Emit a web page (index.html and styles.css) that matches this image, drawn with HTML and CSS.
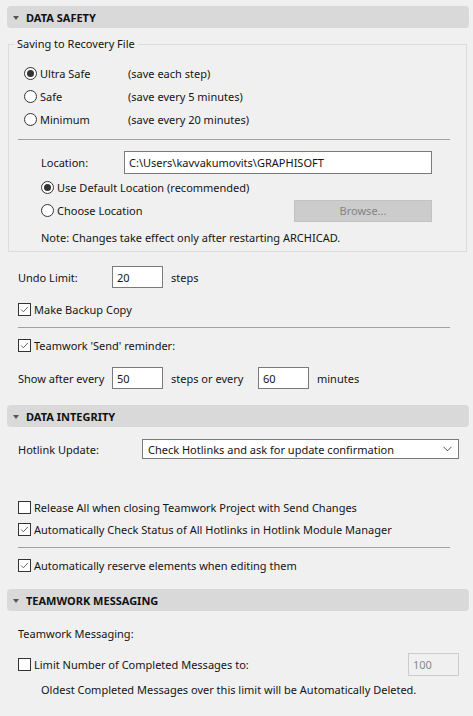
FILE: index.html
```html
<!DOCTYPE html>
<html>
<head>
<meta charset="utf-8">
<link rel="stylesheet" href="styles.css">
</head>
<body>
<div class="page">
  <div class="sec-head"><span class="tri"></span>DATA SAFETY</div>

  <fieldset class="group">
    <legend>Saving to Recovery File</legend>
    <div class="radio-grid">
      <div class="row r23"><span class="radio on"></span>Ultra Safe</div><div class="row r23">(save each step)</div>
      <div class="row r23"><span class="radio"></span>Safe</div><div class="row r23">(save every 5 minutes)</div>
      <div class="row r23"><span class="radio"></span>Minimum</div><div class="row r23">(save every 20 minutes)</div>
    </div>
    <div class="sep in-group"></div>
    <div class="loc">
      <div class="row r23"><span class="loc-label">Location:</span><div class="field wide">C:\Users\kavvakumovits\GRAPHISOFT</div></div>
      <div class="row r23 mt2"><span class="radio on"></span>Use Default Location (recommended)</div>
      <div class="row r23"><span class="radio"></span>Choose Location<button class="browse">Browse...</button></div>
      <div class="row r23 mt4">Note: Changes take effect only after restarting ARCHICAD.</div>
    </div>
  </fieldset>

  <div class="content">
    <div class="row r22 undo"><span class="lab94">Undo Limit:</span><div class="field num">20</div><span class="after">steps</span></div>
    <div class="row r22 mt10"><span class="check on"><svg viewBox="0 0 13 13"><path d="M2.5 6.5 L5.2 9.2 L10.5 3.5" /></svg></span>Make Backup Copy</div>
    <div class="sep mt7"></div>
    <div class="row r22 mt6"><span class="check on"><svg viewBox="0 0 13 13"><path d="M2.5 6.5 L5.2 9.2 L10.5 3.5" /></svg></span>Teamwork 'Send' reminder:</div>
    <div class="row r22 mt11"><span class="lab94">Show after every</span><div class="field num">50</div><span class="after w87">steps or every</span><div class="field num">60</div><span class="after">minutes</span></div>
  </div>

  <div class="sec-head mt16"><span class="tri"></span>DATA INTEGRITY</div>

  <div class="content">
    <div class="row r20 mt12"><span class="lab124">Hotlink Update:</span>
      <div class="select">Check Hotlinks and ask for update confirmation<svg class="chev" viewBox="0 0 9 6"><path d="M0.5 0.8 L4.5 4.8 L8.5 0.8" /></svg></div>
    </div>
    <div class="row r22 mt37"><span class="check"></span>Release All when closing Teamwork Project with Send Changes</div>
    <div class="row r22"><span class="check on"><svg viewBox="0 0 13 13"><path d="M2.5 6.5 L5.2 9.2 L10.5 3.5" /></svg></span>Automatically Check Status of All Hotlinks in Hotlink Module Manager</div>
    <div class="sep mt7"></div>
    <div class="row r22 mt6"><span class="check on"><svg viewBox="0 0 13 13"><path d="M2.5 6.5 L5.2 9.2 L10.5 3.5" /></svg></span>Automatically reserve elements when editing them</div>
  </div>

  <div class="sec-head mt13"><span class="tri"></span>TEAMWORK MESSAGING</div>

  <div class="content">
    <div class="row r22 mt11">Teamwork Messaging:</div>
    <div class="row r23 mt9"><span class="check"></span>Limit Number of Completed Messages to:<div class="field num disabled push">100</div></div>
    <div class="row r22 mt2 indent">Oldest Completed Messages over this limit will be Automatically Deleted.</div>
  </div>
</div>
</body>
</html>
```

FILE: styles.css
```css
* { box-sizing: border-box; }
html, body { margin: 0; padding: 0; }
body {
  background: #f0f0f0;
  width: 473px;
  height: 716px;
  overflow: hidden;
  font-family: "Noto Sans", "Open Sans", sans-serif;
  font-size: 11px;
  color: #141414;
}
.page { padding-top: 6px; }

.sec-head {
  height: 22px;
  margin: 0 4px 0 7px;
  background: #d9d9d9;
  border-radius: 4px;
  display: flex;
  align-items: center;
  font-weight: bold;
  font-size: 11px;
  color: #111;
}
.tri {
  width: 0; height: 0;
  border-left: 3.5px solid transparent;
  border-right: 3.5px solid transparent;
  border-top: 4px solid #555;
  margin: 1px 7px 0 6px;
}

.group {
  margin: 8px 6px 0 8px;
  padding: 10px 0 2px 0;
  border: 1px solid #dcdcdc;
  min-width: 0;
}
.group legend {
  margin-left: 5px;
  padding: 0 3px;
  line-height: 16px;
}

.row { display: flex; align-items: center; white-space: nowrap; }
.r23 { height: 23px; }
.r22 { height: 22px; }
.r20 { height: 20px; }
.mt2 { margin-top: 2px; }
.mt4 { margin-top: 4px; }
.mt6 { margin-top: 6px; }
.mt7 { margin-top: 7px; }
.mt9 { margin-top: 9px; }
.mt10 { margin-top: 10px; }
.mt11 { margin-top: 11px; }
.mt12 { margin-top: 12px; }
.mt13 { margin-top: 13px; }
.mt16 { margin-top: 16px; }
.mt37 { margin-top: 37px; }

.radio-grid {
  display: grid;
  grid-template-columns: 104px auto;
  padding-left: 15px;
}
.radio {
  width: 13px; height: 13px;
  border: 1px solid #333;
  border-radius: 50%;
  background: #fff;
  margin-right: 3px;
  flex: none;
  display: flex;
  align-items: center;
  justify-content: center;
}
.radio.on::after {
  content: "";
  width: 7px; height: 7px;
  border-radius: 50%;
  background: #333;
}

.sep {
  height: 1px;
  background: #a0a0a0;
  width: 432px;
}
.sep.in-group { margin: 8px 0 0 9px; }

.loc {
  margin: 11px 0 0 32px;
  width: 391px;
}
.loc-label { width: 83px; flex: none; }
.field {
  height: 23px;
  border: 1px solid #7a7a7a;
  background: #fff;
  padding: 0 4px;
  display: flex;
  align-items: center;
  flex: none;
}
.field.wide { width: 308px; }
.field.num { width: 51px; height: 22px; }
.field.disabled { border-color: #cccccc; background: #f0f0f0; color: #8a8a8a; height: 23px; }
.push { margin-left: auto; }

.browse {
  margin-left: auto;
  width: 138px;
  height: 22px;
  border: 1px solid #c2c2c2;
  background: #cccccc;
  color: #838383;
  font: inherit;
  padding: 0;
}

.content { padding: 0 14px 0 18px; }
.undo { margin-top: 14px; }
.lab94 { width: 94px; flex: none; }
.lab124 { width: 124px; flex: none; }
.after { margin-left: 8px; }
.w87 { width: 79px; margin-right: 8px; flex: none; }

.check {
  width: 13px; height: 13px;
  border: 1px solid #333;
  background: #fff;
  margin-right: 3px;
  flex: none;
  display: flex;
}
.check svg { width: 11px; height: 11px; }
.check path { fill: none; stroke: #555; stroke-width: 1.1; }

.select {
  width: 317px;
  height: 20px;
  border: 1px solid #7a7a7a;
  background: #fff;
  display: flex;
  align-items: center;
  padding: 0 0 0 5px;
}
.chev {
  width: 9px; height: 6px;
  margin-left: auto;
  margin-right: 6px;
}
.chev path { fill: none; stroke: #555; stroke-width: 1; }

.indent { padding-left: 23px; }
```
